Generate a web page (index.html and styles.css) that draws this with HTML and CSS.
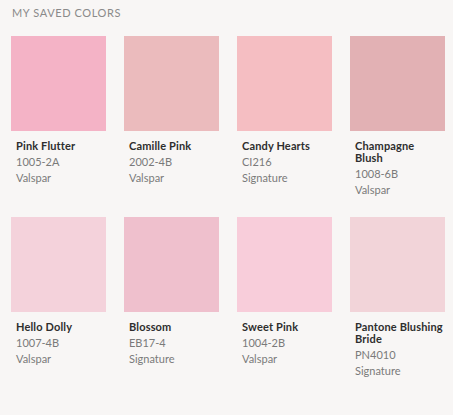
FILE: index.html
```html
<!DOCTYPE html>
<html lang="en">
<head>
    <meta charset="UTF-8">
    <meta name="viewport" content="width=device-width, initial-scale=1.0">
    <title>My Saved Colors</title>
    <link rel="stylesheet" href="styles.css">
</head>
<body>
    <div class="saved">
        <h2 class="saved-title">My Saved Colors</h2>
        <div class="swatch-grid">
            <div class="card">
                <div class="chip" style="background: #f4b3c6;"></div>
                <div class="name">Pink Flutter</div>
                <div class="meta">1005-2A</div>
                <div class="meta">Valspar</div>
            </div>
            <div class="card">
                <div class="chip" style="background: #ebbbbd;"></div>
                <div class="name">Camille Pink</div>
                <div class="meta">2002-4B</div>
                <div class="meta">Valspar</div>
            </div>
            <div class="card">
                <div class="chip" style="background: #f5bec2;"></div>
                <div class="name">Candy Hearts</div>
                <div class="meta">CI216</div>
                <div class="meta">Signature</div>
            </div>
            <div class="card">
                <div class="chip" style="background: #e2b1b4;"></div>
                <div class="name">Champagne Blush</div>
                <div class="meta">1008-6B</div>
                <div class="meta">Valspar</div>
            </div>
            <div class="card">
                <div class="chip" style="background: #f4d2db;"></div>
                <div class="name">Hello Dolly</div>
                <div class="meta">1007-4B</div>
                <div class="meta">Valspar</div>
            </div>
            <div class="card">
                <div class="chip" style="background: #efc0cd;"></div>
                <div class="name">Blossom</div>
                <div class="meta">EB17-4</div>
                <div class="meta">Signature</div>
            </div>
            <div class="card">
                <div class="chip" style="background: #f8cdda;"></div>
                <div class="name">Sweet Pink</div>
                <div class="meta">1004-2B</div>
                <div class="meta">Valspar</div>
            </div>
            <div class="card">
                <div class="chip" style="background: #f2d4d9;"></div>
                <div class="name">Pantone Blushing Bride</div>
                <div class="meta">PN4010</div>
                <div class="meta">Signature</div>
            </div>
        </div>
    </div>
</body>
</html>
```

FILE: styles.css
```css
body {
    font-family: Lato, "Open Sans", Arial, sans-serif;
    background-color: #f8f6f5;
    margin: 0;
    color: #333;
}

.saved {
    padding: 7px 0 0 11px;
}

.saved-title {
    margin: 0 0 0 1px;
    font-size: 11px;
    font-weight: normal;
    line-height: 12px;
    letter-spacing: 0.6px;
    text-transform: uppercase;
    color: #8a8a8a;
}

.swatch-grid {
    display: grid;
    grid-template-columns: repeat(4, 95px);
    grid-auto-rows: 163px;
    column-gap: 18px;
    row-gap: 18px;
    margin-top: 17px;
}

.chip {
    width: 95px;
    height: 95px;
}

.name {
    margin-top: 9px;
    padding-left: 5px;
    font-size: 11px;
    font-weight: bold;
    line-height: 12px;
    letter-spacing: 0.15px;
    color: #2e2e2e;
}

.meta {
    padding-left: 5px;
    font-size: 11px;
    line-height: 16px;
    color: #7a7a7a;
}

.name + .meta {
    margin-top: 2px;
}
```
